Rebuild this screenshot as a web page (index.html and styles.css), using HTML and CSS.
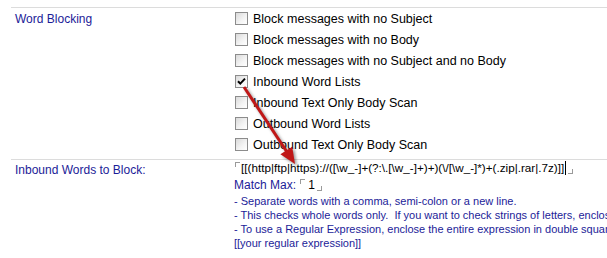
FILE: index.html
```html
<!DOCTYPE html>
<html>
<head>
<meta charset="utf-8">
<link rel="stylesheet" href="styles.css">
</head>
<body>
<div class="page">
  <div class="row">
    <div class="label label-top">Word Blocking</div>
    <div class="value">
      <ul class="checks">
        <li><span class="box"></span>Block messages with no Subject</li>
        <li><span class="box"></span>Block messages with no Body</li>
        <li><span class="box"></span>Block messages with no Subject and no Body</li>
        <li><span class="box checked"><svg viewBox="0 0 11 11" width="11" height="11"><path d="M2 5.2 L4.3 7.6 L9 2.6" fill="none" stroke="#000" stroke-width="2"/></svg></span>Inbound Word Lists</li>
        <li><span class="box"></span>Inbound Text Only Body Scan</li>
        <li><span class="box"></span>Outbound Word Lists</li>
        <li><span class="box"></span>Outbound Text Only Body Scan</li>
      </ul>
    </div>
  </div>
  <div class="row">
    <div class="label label-second">Inbound Words to Block:</div>
    <div class="value">
      <div class="edit"><span class="c-tl"></span><span class="txt">[[(http|ftp|https)://([\w_-]+(?:\.[\w_-]+)+)(\/[\w_-]*)+(.zip|.rar|.7z)]]</span><span class="cursor"></span><span class="c-br"></span></div>
      <div class="match">Match Max: <span class="c-tl"></span><span class="num">1</span><span class="c-br"></span></div>
      <div class="help">
        <div>- Separate words with a comma, semi-colon or a new line.</div>
        <div>- This checks whole words only.&nbsp; If you want to check strings of letters, enclose them in double square brackets.</div>
        <div>- To use a Regular Expression, enclose the entire expression in double square brackets like this:</div>
        <div>[[your regular expression]]</div>
      </div>
    </div>
  </div>
  <svg class="arrow" width="607" height="258" viewBox="0 0 607 258">
    <g class="arrow-g">
      <line x1="244" y1="87" x2="287" y2="152" stroke="#c01818" stroke-width="3"/>
      <polygon points="295,164 280.4,154.3 292.2,146.7" fill="#c01818"/>
    </g>
  </svg>
</div>
</body>
</html>
```

FILE: styles.css
```css
html, body {
  margin: 0;
  padding: 0;
  background: #fff;
}
body {
  font-family: "Liberation Sans", Arial, sans-serif;
  overflow: hidden;
  width: 607px;
  height: 258px;
}
.page {
  position: relative;
  padding: 7px 0 0 11px;
}
.row {
  display: grid;
  grid-template-columns: 223px 1fr;
  border-top: 1px solid #dcdcdc;
}
.label {
  color: #1c1c98;
  font-size: 12px;
  line-height: 15px;
  padding-left: 4px;
}
.label-top { padding-top: 4px; }
.label-second { padding-top: 3px; }
.value {
  min-width: 0;
  white-space: nowrap;
  overflow: hidden;
}
.checks {
  list-style: none;
  margin: 0;
  padding: 0 0 4px 1px;
}
.checks li {
  display: flex;
  align-items: center;
  height: 21px;
  font-size: 12.5px;
  color: #000;
  gap: 5px;
}
.box {
  width: 11px;
  height: 11px;
  border: 1px solid #8c8c8c;
  background: linear-gradient(135deg, #dadada 0%, #f4f4f4 60%, #fff 100%);
  flex: none;
  display: flex;
  align-items: center;
  justify-content: center;
}
.box svg { display: block; }
.edit {
  font-size: 11.7px;
  line-height: 15px;
  color: #000;
}
.c-tl, .c-br {
  display: inline-block;
  width: 4px;
  height: 4px;
  border: 0 solid #9a9a9a;
}
.c-tl {
  border-top-width: 1px;
  border-left-width: 1px;
  vertical-align: 5px;
  margin: 0 1px 0 1px;
}
.c-br {
  border-right-width: 1px;
  border-bottom-width: 1px;
  vertical-align: -2px;
  margin-left: 2px;
}
.cursor {
  display: inline-block;
  width: 1px;
  height: 14px;
  background: #000;
  vertical-align: -3px;
  margin-left: 1px;
}
.match {
  margin-top: 3px;
  font-size: 12px;
  line-height: 15px;
  color: #1c1c98;
}
.match .num {
  color: #000;
  margin-left: 2px;
}
.help {
  margin-top: 1px;
  font-size: 11px;
  line-height: 14px;
  color: #1c1c98;
}
.arrow {
  position: absolute;
  left: 0;
  top: 0;
  pointer-events: none;
}
.arrow-g {
  filter: drop-shadow(2px 2px 1.5px rgba(0, 0, 0, 0.4));
}
```
